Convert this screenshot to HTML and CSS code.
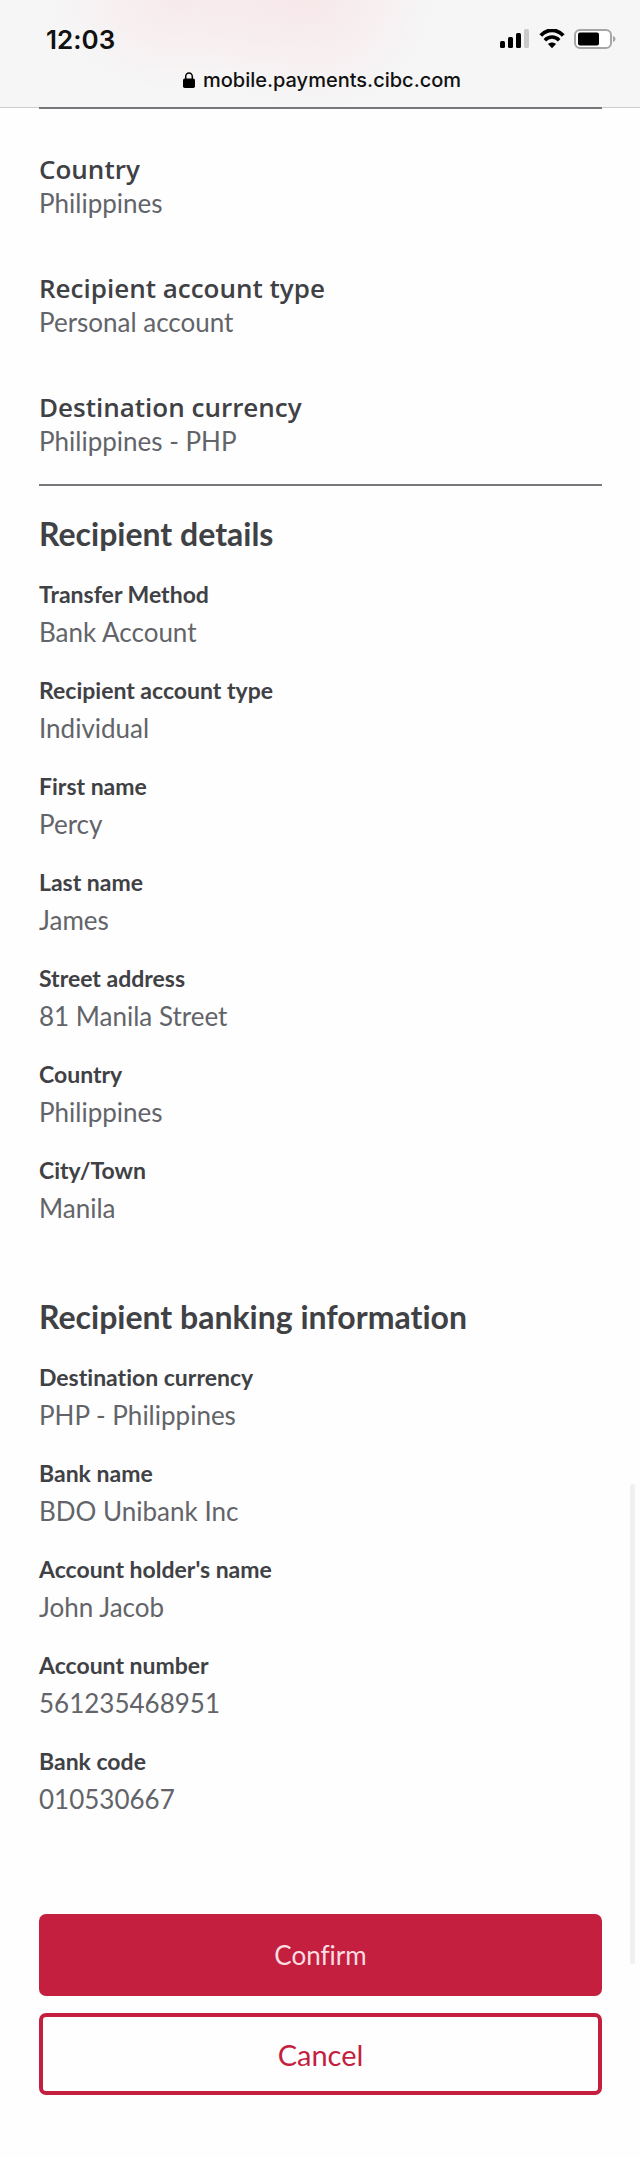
FILE: index.html
```html
<!DOCTYPE html>
<html lang="en">
<head>
<meta charset="utf-8">
<meta name="viewport" content="width=device-width, initial-scale=1">
<title>Confirm recipient</title>
<link rel="stylesheet" href="styles.css">
</head>
<body>
<header class="browser">
  <div class="status">
    <time class="clock">12:03</time>
    <div class="indicators">
      <svg width="30" height="20" viewBox="0 0 30 20" role="img" aria-label="Signal">
        <rect x="0" y="12" width="5" height="7" rx="1.5"/>
        <rect x="8" y="8" width="5" height="11" rx="1.5"/>
        <rect x="16" y="4" width="5" height="15" rx="1.5"/>
        <rect x="24" y="0" width="5" height="19" rx="1.5" fill="#c9c9c9"/>
      </svg>
      <svg width="26" height="20" viewBox="0 0 26 20" role="img" aria-label="Wi-Fi">
        <path d="M1.800 6.500C8-.4 18-.4 24.200 6.500" fill="none" stroke="#000" stroke-width="3.800"/>
        <path d="M5.800 11.200C10 7 16 7 20.200 11.200" fill="none" stroke="#000" stroke-width="3.500"/>
        <path d="M9 15C11.300 13 14.700 13 17 15L13 19.200Z"/>
      </svg>
      <svg width="42" height="20" viewBox="0 0 42 20" role="img" aria-label="Battery">
        <rect x="1" y="1" width="36" height="18" rx="5" fill="#fff" stroke="#a6a6a6" stroke-width="2"/>
        <rect x="4" y="3.500" width="21" height="13" rx="2"/>
        <path d="M39 7C42.300 8 42.300 12 39 13Z" fill="#a6a6a6"/>
      </svg>
    </div>
  </div>
  <div class="address">
    <svg width="12" height="16" viewBox="0 0 12 16" aria-hidden="true">
      <rect x="0" y="6.500" width="12" height="9.500" rx="1.800"/>
      <path d="M2.700 7.500V4.600a3.300 3.600 0 0 1 6.600 0V7.500" fill="none" stroke="#000" stroke-width="1.500"/>
    </svg>
    <span>mobile.payments.cibc.com</span>
  </div>
</header>
<main class="page">
  <section class="summary">
    <dl class="overview">
      <div class="overview-item"><dt>Country</dt><dd>Philippines</dd></div>
      <div class="overview-item"><dt>Recipient account type</dt><dd>Personal account</dd></div>
      <div class="overview-item"><dt>Destination currency</dt><dd>Philippines - PHP</dd></div>
    </dl>
  </section>
  <section class="details">
    <h2>Recipient details</h2>
    <dl class="fields">
      <div class="field"><dt>Transfer Method</dt><dd>Bank Account</dd></div>
      <div class="field"><dt>Recipient account type</dt><dd>Individual</dd></div>
      <div class="field"><dt>First name</dt><dd>Percy</dd></div>
      <div class="field"><dt>Last name</dt><dd>James</dd></div>
      <div class="field"><dt>Street address</dt><dd>81 Manila Street</dd></div>
      <div class="field"><dt>Country</dt><dd>Philippines</dd></div>
      <div class="field"><dt>City/Town</dt><dd>Manila</dd></div>
    </dl>
  </section>
  <section class="details">
    <h2>Recipient banking information</h2>
    <dl class="fields">
      <div class="field"><dt>Destination currency</dt><dd>PHP - Philippines</dd></div>
      <div class="field"><dt>Bank name</dt><dd>BDO Unibank Inc</dd></div>
      <div class="field"><dt>Account holder's name</dt><dd>John Jacob</dd></div>
      <div class="field"><dt>Account number</dt><dd>561235468951</dd></div>
      <div class="field"><dt>Bank code</dt><dd>010530667</dd></div>
    </dl>
  </section>
  <div class="actions">
    <button type="button" class="button confirm">Confirm</button>
    <button type="button" class="button cancel">Cancel</button>
  </div>
</main>
<div class="scroll-thumb"></div>
</body>
</html>
```
FILE: styles.css
```css
* {
  box-sizing: border-box;
}

body {
  position: relative;
  margin: 0;
  background: #fefefe;
  color: #3f4145;
  font-family: Lato, "Open Sans", sans-serif;
  font-variant-ligatures: none;
}

.browser {
  padding: 23px 24px 14px 46px;
  background:
    radial-gradient(ellipse 130px 90px at 180px 0, rgb(250 215 221 / 40%), transparent),
    radial-gradient(ellipse 120px 110px at 312px 0, rgb(250 215 221 / 45%), transparent),
    #f6f6f6;
  box-shadow: 0 1px 0 #cfcfcf;
  color: #111;
  font-family: Inter, sans-serif;
}

.status {
  display: flex;
  align-items: center;
  justify-content: space-between;
  height: 32px;
}

.clock {
  font-size: 26px;
  font-weight: 600;
}

.indicators {
  display: flex;
  gap: 9px;
}

.address {
  display: flex;
  align-items: center;
  justify-content: center;
  gap: 8px;
  margin-top: 12px;
  padding-right: 18px;
  font-size: 20px;
  font-weight: 500;
  line-height: 26px;
}

.page {
  position: relative;
  padding: 0 38px 64px 39px;
}

dl,
dd,
h2 {
  margin: 0;
}

.summary {
  border: solid #77787b;
  border-width: 2px 0;
  padding: 43px 0 26px;
}

.overview {
  display: flex;
  flex-direction: column;
  gap: 51px;
}

.overview-item {
  line-height: 34px;
}

dt {
  font-weight: 700;
}

dd {
  color: #626469;
  font-size: 26px;
}

.overview dt {
  font-family: "Open Sans", sans-serif;
  font-size: 26px;
  font-weight: 600;
}

.details {
  padding: 28px 0 42px;
}

h2 {
  font-size: 32px;
  font-weight: 700;
  line-height: 40px;
}

.fields {
  display: flex;
  flex-direction: column;
  gap: 20px;
  margin-top: 21px;
}

.field {
  line-height: 38px;
}

.field dt {
  font-size: 23px;
}

.actions {
  display: flex;
  flex-direction: column;
  gap: 17px;
  padding-top: 54px;
}

.button {
  height: 82px;
  border: 4px solid #c41f3e;
  border-radius: 7px;
  font-family: inherit;
  font-variant-ligatures: inherit;
}

.confirm {
  background: #c41f3e;
  color: #fbdde2;
  font-size: 26px;
}

.cancel {
  background: #fefefe;
  color: #c41f3e;
  font-size: 29px;
}

.scroll-thumb {
  position: absolute;
  top: 1484px;
  right: 5px;
  width: 5px;
  height: 480px;
  border-radius: 3px;
  background: #f0f0f0;
}
```
